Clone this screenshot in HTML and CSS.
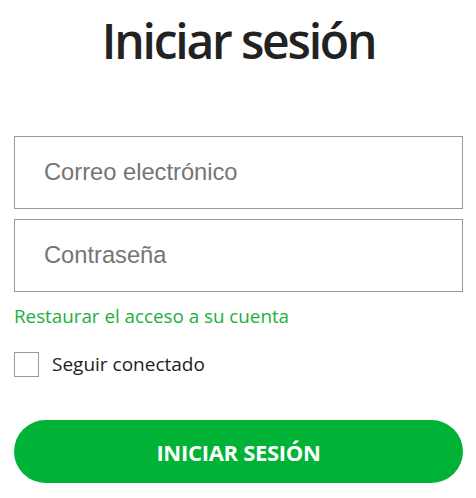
FILE: index.html
```html
<!DOCTYPE html>
<html lang="es">
<head>
    <meta charset="UTF-8">
    <title>Iniciar sesión</title>
    <link rel="stylesheet" href="styles.css">
</head>
<body>
    <div class="login">
        <h1 class="login-title">Iniciar sesión</h1>
        <form class="login-form">
            <input class="field" type="email" placeholder="Correo electrónico" autofocus>
            <input class="field" type="password" placeholder="Contraseña">
            <a class="restore-link" href="#">Restaurar el acceso a su cuenta</a>
            <label class="remember">
                <input type="checkbox" class="remember-box">
                <span>Seguir conectado</span>
            </label>
            <button type="submit" class="submit-btn">INICIAR SESIÓN</button>
        </form>
    </div>
</body>
</html>
```

FILE: styles.css
```css
body {
    margin: 0;
    background: #fff;
    color: #222;
    font-family: 'Open Sans', sans-serif;
}
.login {
    padding: 0 13px 0 14px;
}
.login-title {
    margin: 11px 0 0;
    text-align: center;
    font-size: 48px;
    font-weight: 600;
    line-height: 60px;
    letter-spacing: -2.2px;
    color: #222;
}
.login-form {
    display: flex;
    flex-direction: column;
    margin-top: 65px;
}
.field {
    box-sizing: border-box;
    height: 73px;
    padding: 0 29px;
    border: 1px solid #999;
    border-radius: 0;
    font-family: 'Liberation Sans', Arial, sans-serif;
    font-size: 23.7px;
    color: #333;
    outline: none;
}
.field + .field {
    margin-top: 10px;
}
.field::placeholder {
    color: #757575;
}
.restore-link {
    margin-top: 11px;
    font-size: 18.8px;
    line-height: 26px;
    color: #1bb03b;
    text-decoration: none;
}
.remember {
    display: flex;
    align-items: center;
    gap: 13px;
    margin-top: 22px;
    font-size: 19px;
    color: #222;
}
.remember-box {
    appearance: none;
    margin: 0;
    width: 25px;
    height: 25px;
    border: 1px solid #999;
    background: #fff;
}
.submit-btn {
    margin-top: 43px;
    height: 63px;
    border: none;
    border-radius: 32px;
    background: #00b336;
    color: #fff;
    font-family: 'Open Sans', sans-serif;
    font-size: 22px;
    font-weight: 700;
    letter-spacing: -0.3px;
    cursor: pointer;
}
```
